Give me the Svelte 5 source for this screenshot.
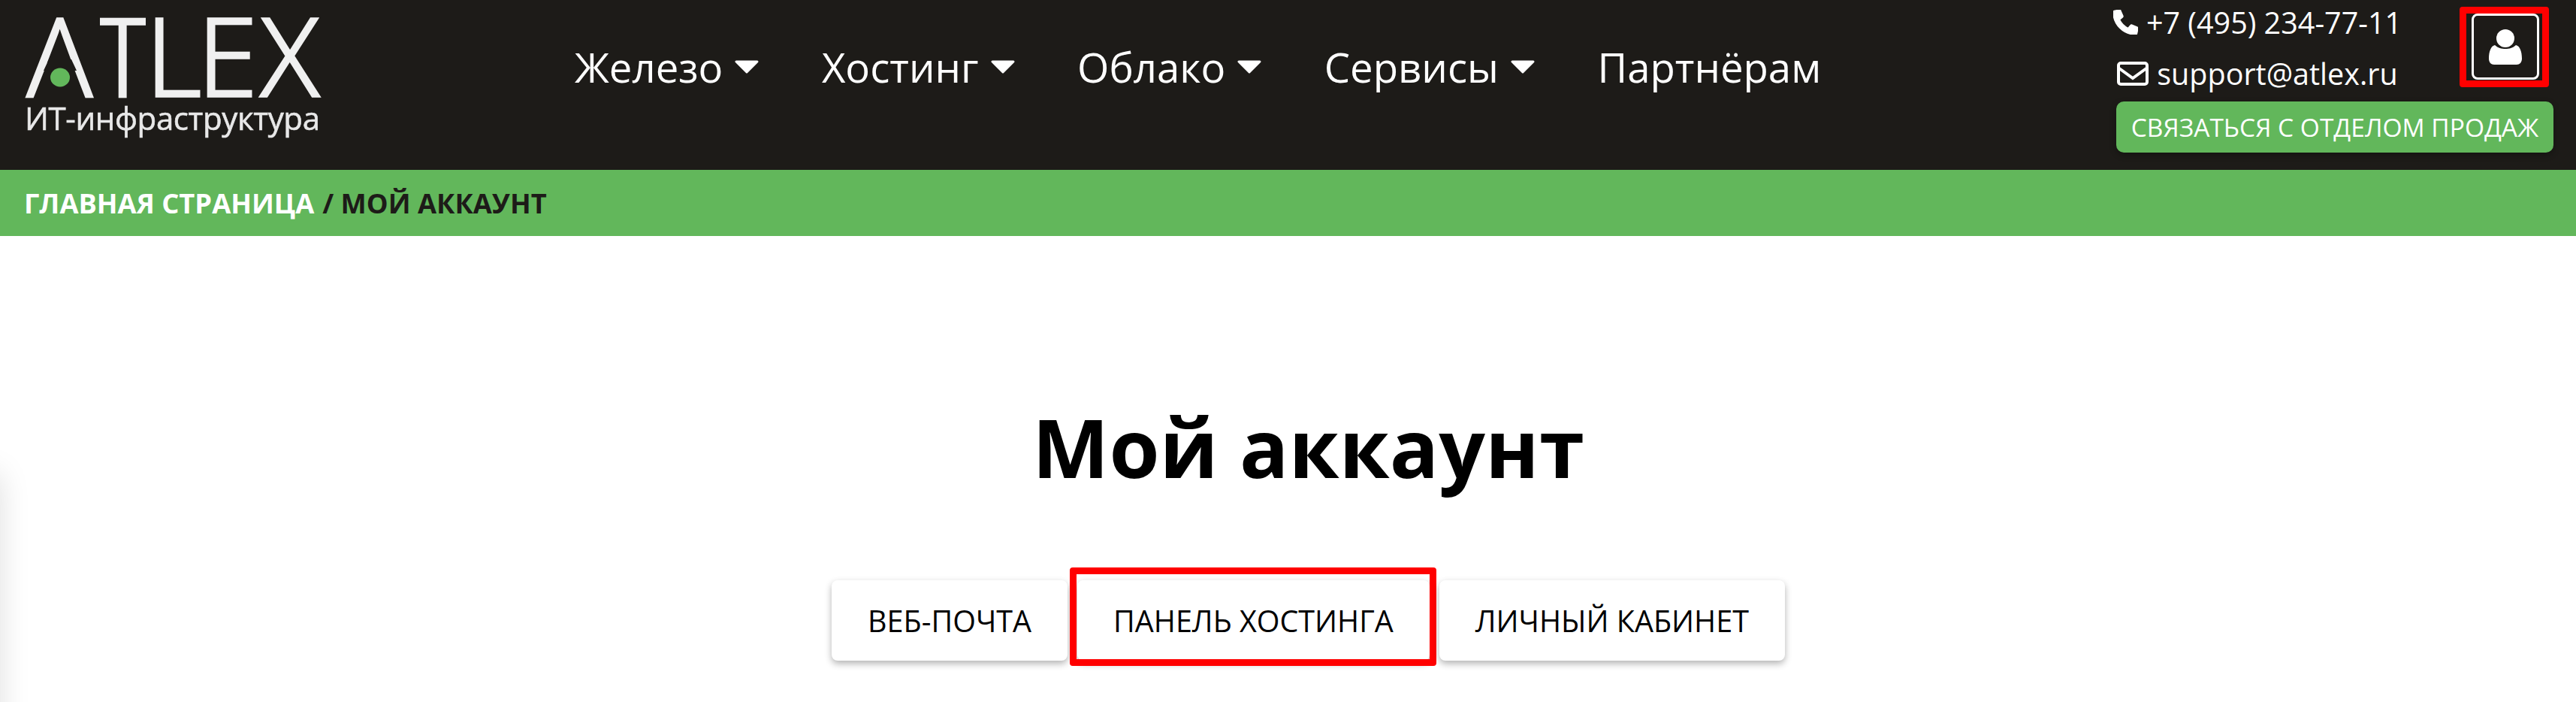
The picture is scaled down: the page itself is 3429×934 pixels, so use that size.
<script>
	const menu = [
		{ label: 'Железо', caret: true },
		{ label: 'Хостинг', caret: true },
		{ label: 'Облако', caret: true },
		{ label: 'Сервисы', caret: true },
		{ label: 'Партнёрам', caret: false }
	];
	const tabs = ['ВЕБ-ПОЧТА', 'ПАНЕЛЬ ХОСТИНГА', 'ЛИЧНЫЙ КАБИНЕТ'];
</script>

<div class="page">
	<header class="topbar">
		<a class="logo" href="#top" aria-label="ATLEX">
			<svg width="400" height="172" viewBox="0 0 400 172">
				<text class="logo-word" x="3 92.500 161 230 314" y="107.500">ATLEX</text>
				<!-- logo's A has no crossbar and its T is narrow -->
				<path d="M32 59h30l7 15H25zM90 -3h10v20H90zM161 -3h10v20h-10z" fill="#1d1b18" />
				<ellipse cx="47" cy="83" rx="13" ry="12.500" fill="#62b75b" />
				<text class="logo-sub" x="0" y="153" textLength="393" lengthAdjust="spacing">ИТ-инфраструктура</text>
			</svg>
		</a>

		<nav class="menu">
			{#each menu as item}
				<a href="#top" class="menu-item">
					{item.label}
					{#if item.caret}
						<svg class="caret" width="32" height="18" viewBox="0 0 32 18">
							<path d="M2 2h28L16 16z" fill="#fff" stroke="#fff" stroke-width="3" stroke-linejoin="round" />
						</svg>
					{/if}
				</a>
			{/each}
		</nav>

		<div class="contacts">
			<div class="contacts-top">
				<div class="lines">
					<a href="#top" class="line">
						<svg width="33" height="33" viewBox="0 0 512 512">
							<path fill="#fff" stroke="#fff" stroke-width="24" stroke-linejoin="round" d="M497.390 361.800l-112-48a24 24 0 0 0-28 6.900l-49.600 60.600A370.660 370.660 0 0 1 130.600 204.110l60.600-49.600a23.940 23.940 0 0 0 6.900-28l-48-112A24.160 24.160 0 0 0 122.600.610l-104 24A24 24 0 0 0 0 48c0 256.500 207.900 464 464 464a24 24 0 0 0 23.400-18.600l24-104a24.290 24.290 0 0 0-14.010-27.600z" />
						</svg>
						+7 (495) 234-77-11
					</a>
					<a href="#top" class="line">
						<svg width="42" height="32" viewBox="0 0 42 32">
							<rect x="2" y="2" width="38" height="28" rx="3" fill="none" stroke="#fff" stroke-width="4" />
							<path d="M3 9l18 13L39 9" fill="none" stroke="#fff" stroke-width="4" />
						</svg>
						support@atlex.ru
					</a>
				</div>
				<div class="account">
					<svg width="44" height="47" viewBox="0 0 44 47">
						<circle cx="22" cy="12" r="12" fill="#fff" />
						<path d="M8 21c4 4 9 5 14 5s10-1 14-5c5 1 8 8 8 18 0 5-3 8-7 8H7c-4 0-7-3-7-8 0-10 3-17 8-18z" fill="#fff" />
					</svg>
					<span class="mark mark-account"></span>
				</div>
			</div>
			<a href="#top" class="sales">СВЯЗАТЬСЯ С ОТДЕЛОМ ПРОДАЖ</a>
		</div>
	</header>

	<div class="crumbs">
		<a href="#top">ГЛАВНАЯ СТРАНИЦА</a> / МОЙ АККАУНТ
	</div>

	<main class="content">
		<h1>Мой аккаунт</h1>
		<div class="tabs">
			{#each tabs as tab, i}
				<button class="tab">
					{tab}
					{#if i === 1}
						<span class="mark mark-tab"></span>
					{/if}
				</button>
			{/each}
		</div>
	</main>

	<div class="edge"></div>
</div>

<style>
	:global(body) {
		margin: 0;
		background: #fff;
	}
	.page {
		position: relative;
		height: 934px;
		overflow: hidden;
		font-family: 'Open Sans', sans-serif;
		color: #000;
	}
	a {
		color: inherit;
		text-decoration: none;
	}
	.topbar {
		display: flex;
		height: 226px;
		background: #1d1b18;
		color: #fff;
		box-sizing: border-box;
		padding: 20px 30px 0 33px;
	}
	.logo {
		display: block;
		width: 400px;
		height: 172px;
		filter: blur(0.7px);
	}
	.logo svg {
		overflow: visible;
	}
	.logo-word {
		font-family: 'Open Sans', sans-serif;
		font-weight: 300;
		font-size: 144px;
		fill: #f0f0f0;
		stroke: #f0f0f0;
		stroke-width: 3.500px;
	}
	.logo-sub {
		font-family: 'Open Sans', sans-serif;
		font-size: 42px;
		fill: #e8e8e8;
		stroke: #e8e8e8;
		stroke-width: 0.600px;
	}
	.menu {
		display: flex;
		gap: 83.500px;
		margin-left: 332px;
		padding-top: 34px;
		height: 70px;
		font-size: 54.500px;
		line-height: 70px;
	}
	.menu-item {
		display: flex;
		align-items: center;
		gap: 16px;
		white-space: nowrap;
	}
	.contacts {
		margin-left: auto;
		margin-top: -20px;
		width: 586px;
		font-size: 39.500px;
	}
	.contacts-top {
		display: flex;
		justify-content: space-between;
		padding-top: 7px;
		height: 109px;
	}
	.lines {
		display: flex;
		flex-direction: column;
		align-items: center;
		width: 384px;
	}
	.line {
		display: flex;
		align-items: center;
		gap: 11px;
		height: 45px;
		margin-bottom: 23px;
		white-space: nowrap;
	}
	.account {
		position: relative;
		display: flex;
		align-items: center;
		justify-content: center;
		box-sizing: border-box;
		width: 90px;
		height: 88px;
		margin: 11px 19px 0 0;
		border: 3px solid #fff;
		border-radius: 8px;
	}
	.mark {
		position: absolute;
		box-sizing: border-box;
		border: 9px solid #f00;
		border-radius: 4px;
		pointer-events: none;
	}
	.mark-account {
		left: -19px;
		top: -12px;
		width: 119px;
		height: 107px;
	}
	.sales {
		display: block;
		box-sizing: border-box;
		width: 582px;
		height: 68px;
		margin: 19px 0 0 4px;
		border-radius: 10px;
		background: #62b75b;
		box-shadow: 0 3px 8px rgba(0, 0, 0, 0.3);
		font-size: 33.500px;
		line-height: 68px;
		text-align: center;
		white-space: nowrap;
	}
	.crumbs {
		display: flex;
		gap: 0.3em;
		align-items: center;
		height: 88px;
		box-sizing: border-box;
		padding-left: 32px;
		background: #62b75b;
		color: #1d1b18;
		font-size: 36.300px;
		font-weight: 700;
	}
	.crumbs a {
		color: #fff;
	}
	.content {
		display: flex;
		flex-direction: column;
		align-items: center;
		padding: 205px 0 0 54px;
	}
	h1 {
		margin: 0;
		font-size: 108.500px;
		line-height: 150px;
		font-weight: 700;
	}
	.tabs {
		display: flex;
		gap: 13px;
		margin-top: 103px;
	}
	.tab {
		position: relative;
		height: 107px;
		padding: 0 48px;
		border: 0;
		border-radius: 8px;
		background: #fff;
		box-shadow: 0 4px 10px rgba(0, 0, 0, 0.3);
		font-family: inherit;
		font-size: 39.500px;
		color: #000;
		white-space: nowrap;
	}
	.mark-tab {
		left: -10px;
		right: -9px;
		top: -17px;
		bottom: -7px;
	}
	.edge {
		position: absolute;
		left: -60px;
		top: 630px;
		width: 60px;
		height: 500px;
		box-shadow: 0 0 40px rgba(0, 0, 0, 0.13);
	}
</style>
